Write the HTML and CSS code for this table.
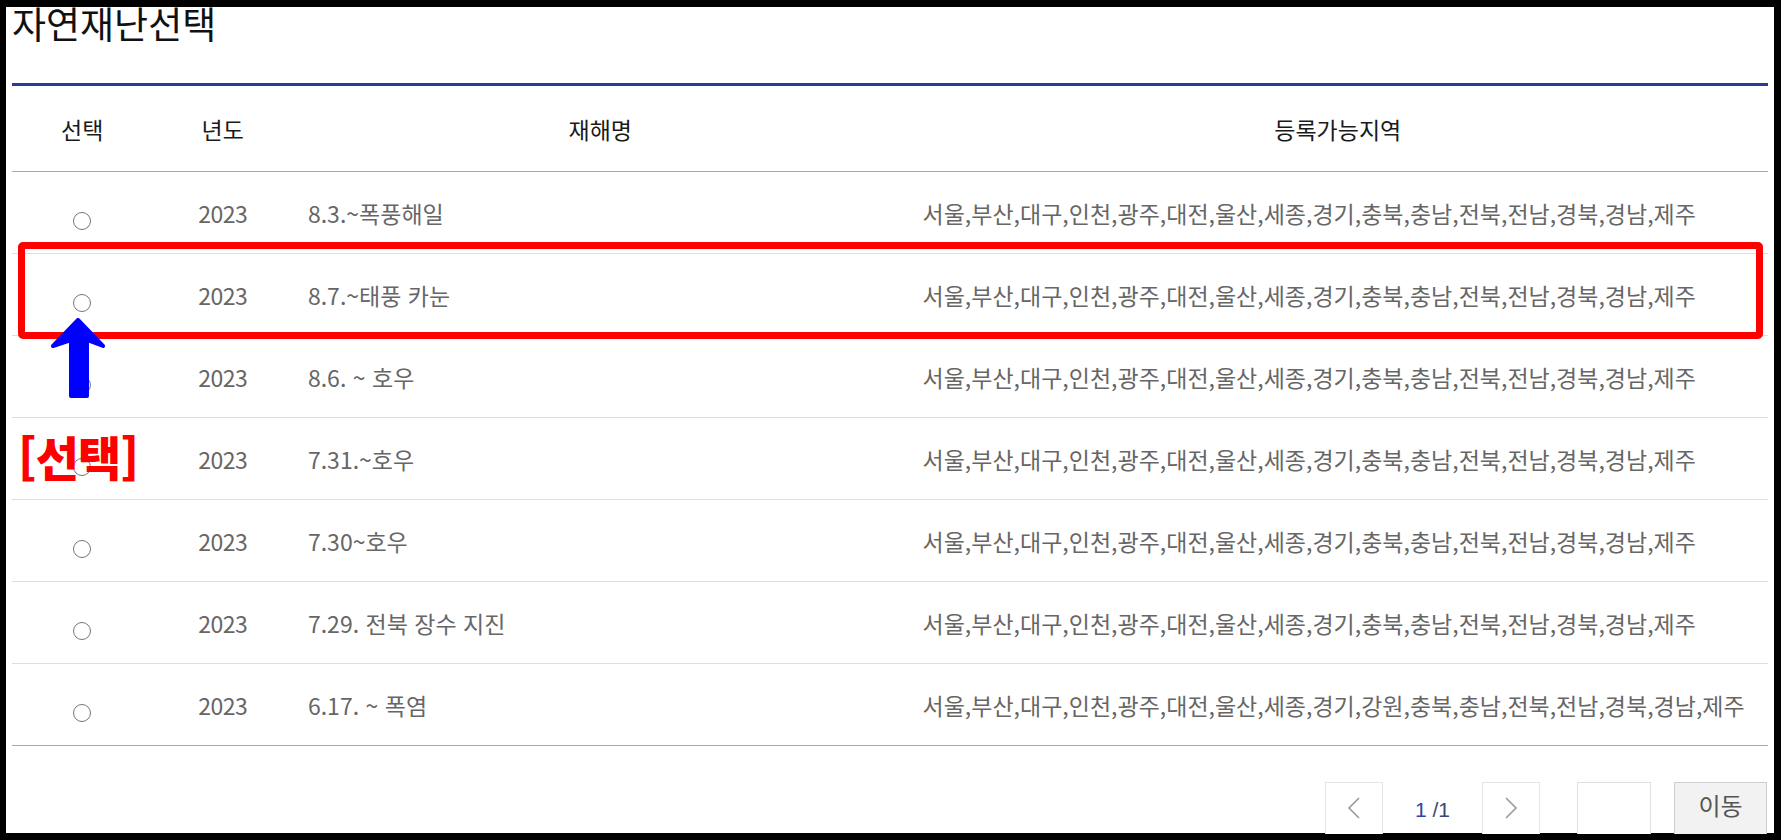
FILE: index.html
```html
<!DOCTYPE html>
<html lang="ko">
<head>
<meta charset="utf-8">
<title>자연재난선택</title>
<link rel="stylesheet" href="styles.css">
</head>
<body>
<div class="frame">
  <h2 class="title">자연재난선택</h2>
  <table class="list">
    <colgroup>
      <col class="c-sel"><col class="c-year"><col class="c-name"><col class="c-area">
    </colgroup>
    <thead>
      <tr><th>선택</th><th>년도</th><th>재해명</th><th>등록가능지역</th></tr>
    </thead>
    <tbody>
      <tr><td class="center"><input type="radio" name="dis" class="radio"></td><td class="center year">2023</td><td>8.3.~폭풍해일</td><td>서울,부산,대구,인천,광주,대전,울산,세종,경기,충북,충남,전북,전남,경북,경남,제주</td></tr>
      <tr><td class="center"><input type="radio" name="dis" class="radio"></td><td class="center year">2023</td><td>8.7.~태풍 카눈</td><td>서울,부산,대구,인천,광주,대전,울산,세종,경기,충북,충남,전북,전남,경북,경남,제주</td></tr>
      <tr><td class="center"><input type="radio" name="dis" class="radio"></td><td class="center year">2023</td><td>8.6. ~ 호우</td><td>서울,부산,대구,인천,광주,대전,울산,세종,경기,충북,충남,전북,전남,경북,경남,제주</td></tr>
      <tr><td class="center"><input type="radio" name="dis" class="radio"></td><td class="center year">2023</td><td>7.31.~호우</td><td>서울,부산,대구,인천,광주,대전,울산,세종,경기,충북,충남,전북,전남,경북,경남,제주</td></tr>
      <tr><td class="center"><input type="radio" name="dis" class="radio"></td><td class="center year">2023</td><td>7.30~호우</td><td>서울,부산,대구,인천,광주,대전,울산,세종,경기,충북,충남,전북,전남,경북,경남,제주</td></tr>
      <tr><td class="center"><input type="radio" name="dis" class="radio"></td><td class="center year">2023</td><td>7.29. 전북 장수 지진</td><td>서울,부산,대구,인천,광주,대전,울산,세종,경기,충북,충남,전북,전남,경북,경남,제주</td></tr>
      <tr class="last"><td class="center"><input type="radio" name="dis" class="radio"></td><td class="center year">2023</td><td>6.17. ~ 폭염</td><td>서울,부산,대구,인천,광주,대전,울산,세종,경기,강원,충북,충남,전북,전남,경북,경남,제주</td></tr>
    </tbody>
  </table>

  <div class="pager">
    <button class="pg-btn" type="button" aria-label="이전">
      <svg width="14" height="22" viewBox="0 0 14 22"><polyline points="12,1 2,11 12,21" fill="none" stroke="#9a9a9a" stroke-width="1.6"/></svg>
    </button>
    <span class="pg-num"><span class="cur">1</span> <span class="tot">/1</span></span>
    <button class="pg-btn" type="button" aria-label="다음">
      <svg width="14" height="22" viewBox="0 0 14 22"><polyline points="2,1 12,11 2,21" fill="none" stroke="#9a9a9a" stroke-width="1.6"/></svg>
    </button>
    <input class="pg-input" type="text">
    <button class="pg-go" type="button">이동</button>
  </div>

  <div class="anno-box"></div>
  <svg class="anno-arrow" width="56" height="82" viewBox="0 0 56 82">
    <path d="M27,2 L52,28 L36,22 L36,78 L20,78 L20,22 L2,28 Z" fill="#0000ff" stroke="#0000ff" stroke-width="4" stroke-linejoin="round"/>
  </svg>
  <div class="anno-label">[선택]</div>
</div>
</body>
</html>
```
FILE: styles.css
```css
* { box-sizing: border-box; }

html, body {
  margin: 0;
  padding: 0;
  background: #000;
}

body {
  font-family: "Noto Sans CJK KR", "Noto Sans", sans-serif;
  padding: 7px 7px 7px 6px;
  height: 840px;
  overflow: hidden;
}

.frame {
  position: relative;
  background: #fff;
  height: 826px;
  padding: 0 6px;
}

.title {
  margin: 0;
  padding: 0;
  font-size: 37px;
  font-weight: 400;
  color: #111;
  line-height: 32px;
  height: 76px;
}

.list {
  width: 100%;
  border-collapse: collapse;
  table-layout: fixed;
  border-top: 3px solid #2b3a92;
}

.c-sel { width: 8%; }
.c-year { width: 8%; }
.c-name { width: 35%; }
.c-area { width: 49%; }

.list th {
  height: 87px;
  padding: 0;
  font-size: 23px;
  font-weight: 400;
  color: #1a1a1a;
  text-align: center;
  border-bottom: 1px solid #a9a9a9;
}

.list td {
  height: 82px;
  padding: 0 0 0 15px;
  font-size: 23px;
  color: #666;
  border-bottom: 1px solid #dedede;
  white-space: nowrap;
}

.list td.center {
  text-align: center;
  padding: 0;
}

.list td.year {
  letter-spacing: -0.5px;
}

.list tr.last td {
  border-bottom-color: #a9a9a9;
}

.radio {
  appearance: none;
  -webkit-appearance: none;
  width: 18px;
  height: 18px;
  margin: 9px 0 0 0;
  border: 1.5px solid #767676;
  border-radius: 50%;
  background: #fff;
  vertical-align: middle;
}

.pager {
  display: flex;
  justify-content: flex-end;
  align-items: flex-start;
  margin-top: 36px;
  padding-right: 1px;
  height: 52px;
  overflow: hidden;
}

.pg-btn {
  flex: none;
  width: 58px;
  height: 60px;
  border: 1px solid #e6e6e6;
  background: #fff;
  padding: 14px 0 0 0;
  display: flex;
  justify-content: center;
  align-items: flex-start;
}

.pg-num {
  width: 99px;
  text-align: center;
  font-size: 21px;
  line-height: 22px;
  padding-top: 17px;
  font-family: "Liberation Sans", Arial, sans-serif;
}

.pg-num .cur { color: #2f43a8; }
.pg-num .tot { color: #3d4771; }

.pg-input {
  flex: none;
  width: 74px;
  height: 60px;
  margin-left: 37px;
  border: 1px solid #e0e0e0;
  background: #fff;
}

.pg-go {
  flex: none;
  width: 93px;
  height: 60px;
  margin-left: 23px;
  border: 1px solid #cfcfcf;
  background: #f2f2f2;
  font-family: "Noto Sans CJK KR", sans-serif;
  font-size: 24px;
  color: #555;
  padding: 0 0 14px 0;
  line-height: 30px;
  text-align: center;
}

/* annotations drawn over the screenshot */
.anno-box {
  position: absolute;
  left: 12px;
  top: 235px;
  width: 1745px;
  height: 97px;
  border: 7px solid #ff0000;
  border-radius: 5px;
}

.anno-arrow {
  position: absolute;
  left: 45px;
  top: 311px;
}

.anno-label {
  position: absolute;
  left: 12px;
  top: 425px;
  font-size: 47px;
  font-weight: 900;
  line-height: 1;
  color: #ff0000;
  letter-spacing: -1px;
}
```
